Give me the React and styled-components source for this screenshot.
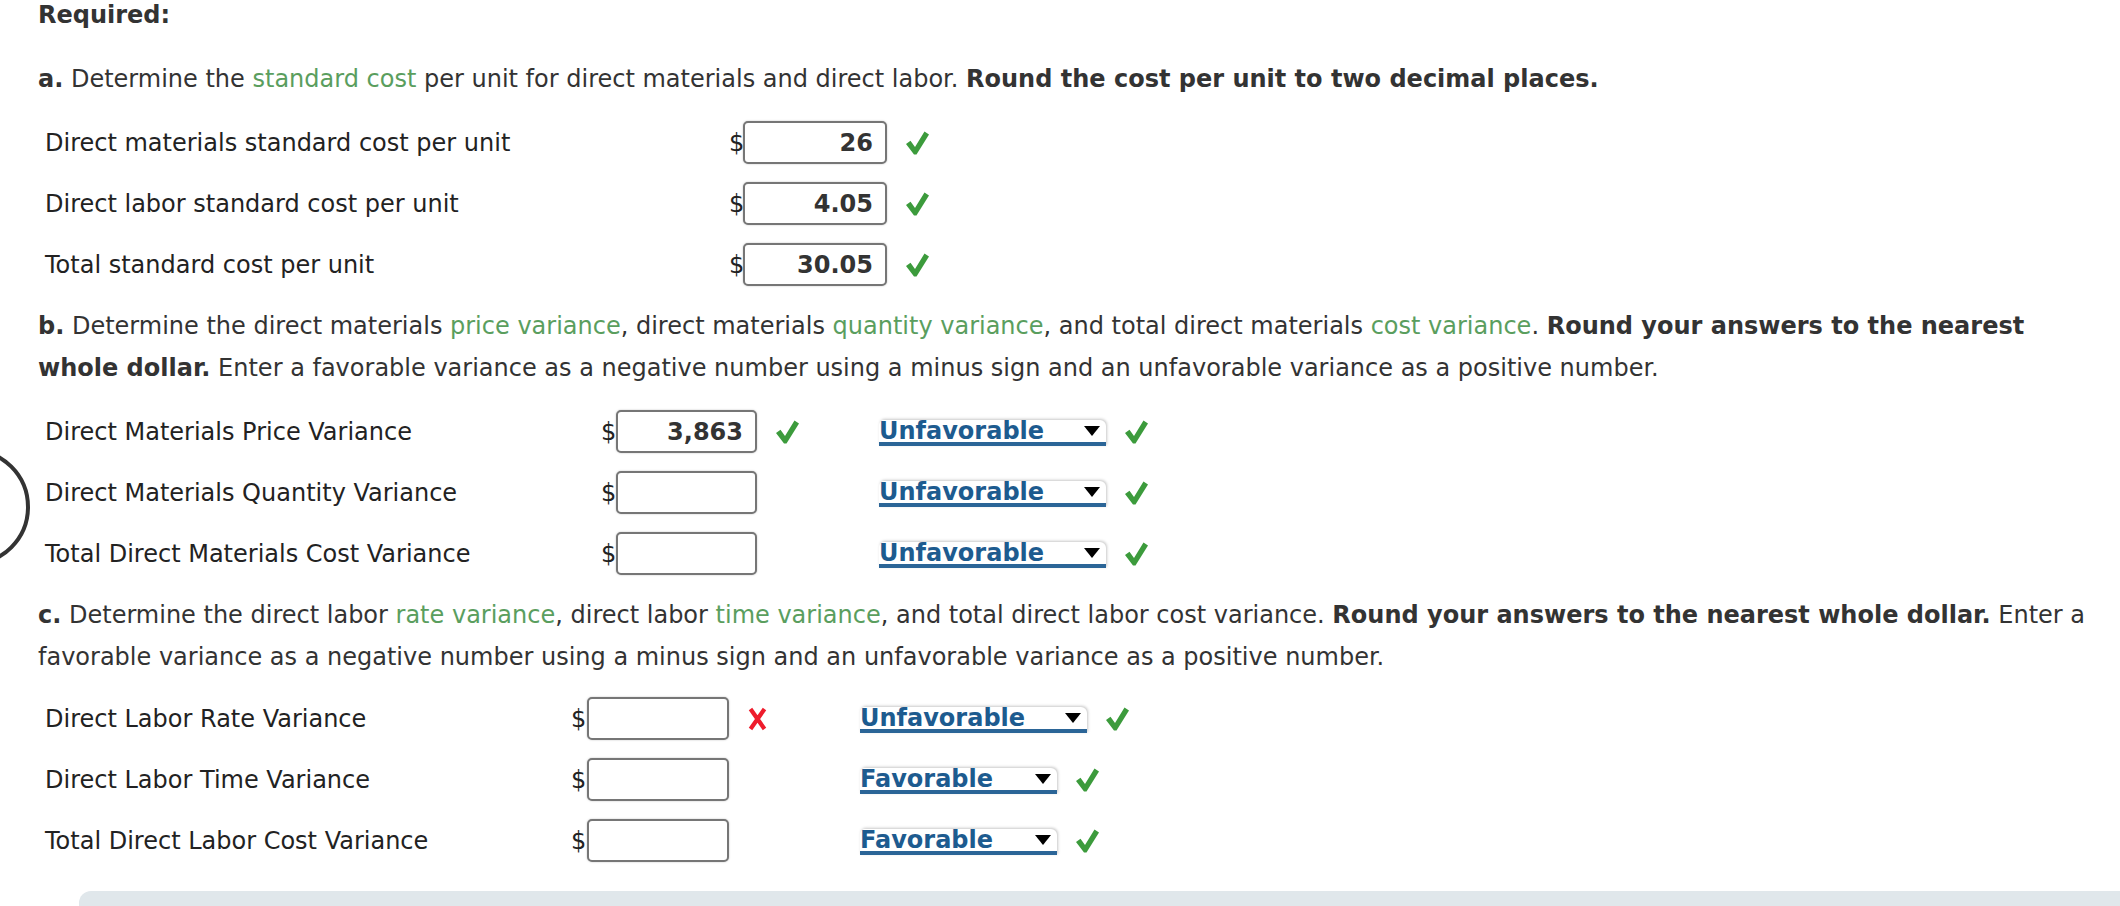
import React from 'react';
import styled, { createGlobalStyle } from 'styled-components';

const GlobalStyle = createGlobalStyle`
  html, body {
    margin: 0;
    padding: 0;
    background: #ffffff;
    overflow: hidden;
  }
  body {
    font-family: "DejaVu Sans", Verdana, sans-serif;
    color: #333333;
  }
`

const Page = styled.div`
  position: relative;
  padding-left: 38px;
  width: 2120px;
  box-sizing: border-box;
`

const Heading = styled.div`
  font-size: 24px;
  font-weight: bold;
  line-height: 30px;
  color: #333;
`

const Section = styled.div`
  margin-top: ${p => p.top}px;
`

const Prompt = styled.p`
  margin: 0;
  font-size: 24px;
  line-height: 42px;
  color: #333;
`

const Term = styled.span`
  color: #5a9e5e;
`

const Rows = styled.div`
  margin-top: ${p => p.top || 12}px;
  padding-left: 7px;
`

const Row = styled.div`
  display: flex;
  align-items: center;
  height: 61px;
`

const Label = styled.div`
  width: ${p => p.width}px;
  flex-shrink: 0;
  font-size: 24px;
  color: #222;
`

const Dollar = styled.div`
  width: ${p => p.width || 15}px;
  font-size: 24px;
  color: #222;
`

const AmountBox = styled.div`
  width: ${p => p.width}px;
  height: 43px;
  box-sizing: border-box;
  border: 2px solid #767676;
  border-radius: 5px;
  box-shadow: 0 0 2px rgba(0, 0, 0, 0.25);
  background: #fff;
  display: flex;
  align-items: center;
  justify-content: flex-end;
  padding-right: 12px;
  font-size: 24px;
  font-weight: bold;
  color: #333;
`

const MarkCell = styled.div`
  width: ${p => p.width}px;
  flex-shrink: 0;
  display: flex;
  align-items: center;
  padding-left: ${p => p.pad}px;
  box-sizing: border-box;
`

const Select = styled.div`
  width: ${p => p.width}px;
  height: 26px;
  box-sizing: border-box;
  background: #fff;
  border-radius: 5px 6px 0 0;
  box-shadow: 1px -1px 3px rgba(0, 0, 0, 0.22);
  border-bottom: 4px solid #2b6597;
  display: flex;
  align-items: center;
  justify-content: space-between;
  padding-right: 6px;
  margin-top: 2px;
`

const SelectText = styled.span`
  font-size: 24px;
  font-weight: bold;
  color: #1d5b8f;
  line-height: 22px;
`

const Arrow = styled.span`
  width: 0;
  height: 0;
  border-left: 8px solid transparent;
  border-right: 8px solid transparent;
  border-top: 10px solid #000;
`

const SecondMark = styled.div`
  margin-left: 18px;
  display: flex;
  align-items: center;
`

const Ring = styled.div`
  position: absolute;
  left: -88px;
  top: 448px;
  width: 110px;
  height: 110px;
  border: 4px solid #333;
  border-radius: 50%;
`

const Footer = styled.div`
  margin-top: 20px;
  margin-left: 41px;
  height: 60px;
  background: #e0e7eb;
  border-radius: 12px 0 0 0;
`

const Check = () => (
  <svg width="24" height="26" viewBox="0 0 24 26">
    <path d="M1 14 L5.5 10.8 L10 17 L19.5 1.5 L24 4.5 L11.5 24.5 L9 24.5 Z" fill="#3c9b3c" />
  </svg>
)

const Cross = () => (
  <svg width="19" height="24" viewBox="0 0 19 24">
    <path d="M2.5 2 L16.5 22 M16.5 2 L2.5 22" stroke="#ee1c2c" strokeWidth="4.2" strokeLinecap="butt" />
  </svg>
)

function Dropdown({ value, width }) {
  return (
    <>
      <Select width={width}>
        <SelectText>{value}</SelectText>
        <Arrow />
      </Select>
      <SecondMark><Check /></SecondMark>
    </>
  )
}

const partA = [
  { label: 'Direct materials standard cost per unit', value: '26' },
  { label: 'Direct labor standard cost per unit', value: '4.05' },
  { label: 'Total standard cost per unit', value: '30.05' },
]

const partB = [
  { label: 'Direct Materials Price Variance', value: '3,863', mark: 'check', choice: 'Unfavorable' },
  { label: 'Direct Materials Quantity Variance', value: '', choice: 'Unfavorable' },
  { label: 'Total Direct Materials Cost Variance', value: '', choice: 'Unfavorable' },
]

const partC = [
  { label: 'Direct Labor Rate Variance', value: '', mark: 'cross', choice: 'Unfavorable' },
  { label: 'Direct Labor Time Variance', value: '', choice: 'Favorable' },
  { label: 'Total Direct Labor Cost Variance', value: '', choice: 'Favorable' },
]

const selectWidth = { Unfavorable: 227, Favorable: 197 }

function VarianceRows({ rows, labelWidth, dollarWidth, boxWidth, markWidth, markPad, top }) {
  return (
    <Rows top={top}>
      {rows.map(r => (
        <Row key={r.label}>
          <Label width={labelWidth}>{r.label}</Label>
          <Dollar width={dollarWidth}>$</Dollar>
          <AmountBox width={boxWidth}>{r.value}</AmountBox>
          <MarkCell width={markWidth} pad={markPad}>
            {r.mark === 'check' && <Check />}
            {r.mark === 'cross' && <Cross />}
          </MarkCell>
          <Dropdown value={r.choice} width={selectWidth[r.choice]} />
        </Row>
      ))}
    </Rows>
  )
}

export default function App() {
  return (
    <Page>
      <GlobalStyle />
      <Ring />
      <Heading>Required:</Heading>

      <Section top={28}>
        <Prompt>
          <b>a.</b> Determine the <Term>standard cost</Term> per unit for direct materials and direct labor.{' '}
          <b>Round the cost per unit to two decimal places.</b>
        </Prompt>
        <Rows>
          {partA.map(r => (
            <Row key={r.label}>
              <Label width={684}>{r.label}</Label>
              <Dollar width={14}>$</Dollar>
              <AmountBox width={144}>{r.value}</AmountBox>
              <MarkCell width={60} pad={18}><Check /></MarkCell>
            </Row>
          ))}
        </Rows>
      </Section>

      <Section top={10}>
        <Prompt>
          <b>b.</b> Determine the direct materials <Term>price variance</Term>, direct materials{' '}
          <Term>quantity variance</Term>, and total direct materials <Term>cost variance</Term>.{' '}
          <b>Round your answers to the nearest</b>
          <br />
          <b>whole dollar.</b> Enter a favorable variance as a negative number using a minus sign and an unfavorable
          variance as a positive number.
        </Prompt>
        <VarianceRows rows={partB} labelWidth={556} dollarWidth={15} boxWidth={141} markWidth={122} markPad={18} />
      </Section>

      <Section top={10}>
        <Prompt>
          <b>c.</b> Determine the direct labor <Term>rate variance</Term>, direct labor <Term>time variance</Term>, and
          total direct labor cost variance. <b>Round your answers to the nearest whole dollar.</b> Enter a
          <br />
          favorable variance as a negative number using a minus sign and an unfavorable variance as a positive number.
        </Prompt>
        <VarianceRows rows={partC} labelWidth={526} dollarWidth={16} boxWidth={142} markWidth={131} markPad={19} top={10} />
      </Section>

      <Footer />
    </Page>
  )
}
